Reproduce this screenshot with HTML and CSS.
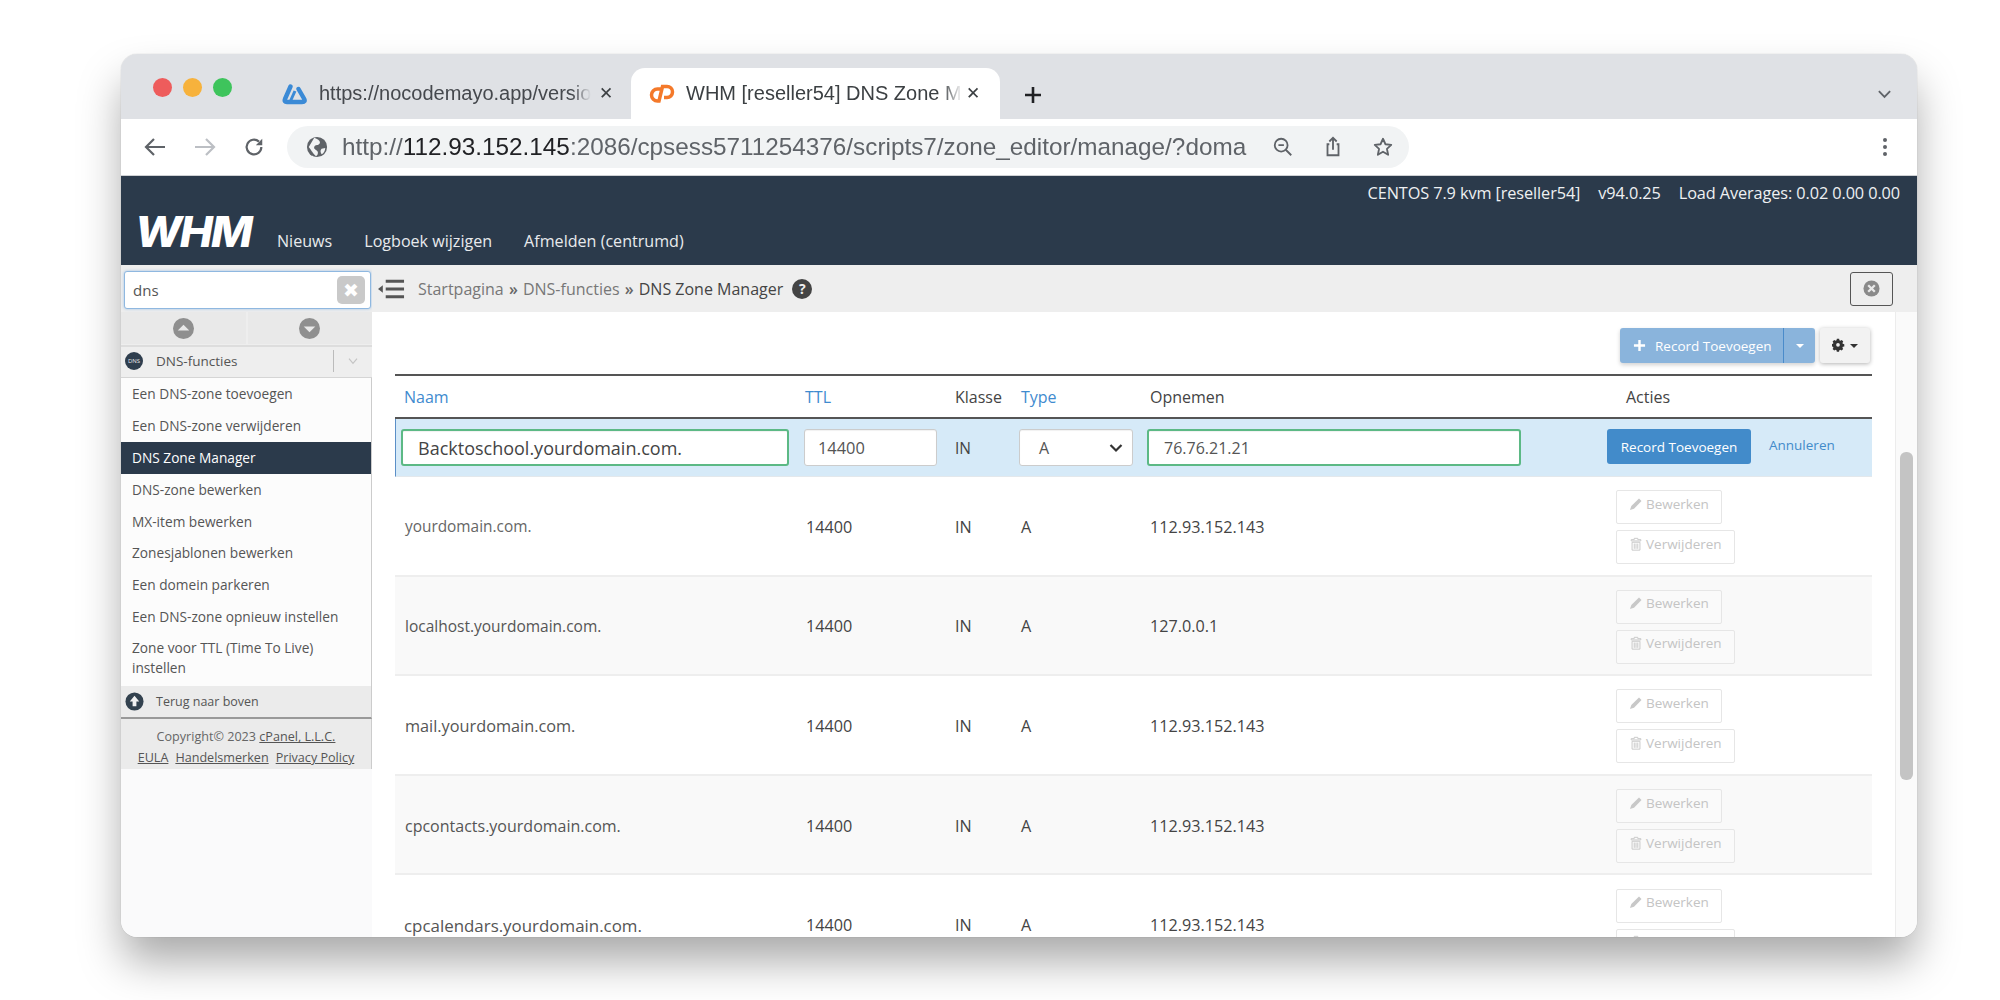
FILE: index.html
```html
<!DOCTYPE html>
<html lang="nl">
<head>
<meta charset="utf-8">
<title>WHM DNS Zone Manager</title>
<link rel="stylesheet" href="styles.css">
</head>
<body>
<div class="window">
  <div class="tabstrip">
    <div class="lights"><i class="light red"></i><i class="light yellow"></i><i class="light green"></i></div>
    <div class="tab">
      <svg class="favicon" viewBox="0 0 26 22"><path d="M9.500 3.500 4 16q-1.200 3 2 3h15q4 0 2-3.500L17.500 6" fill="none" stroke="#3b8ad6" stroke-width="4.400" stroke-linejoin="round" stroke-linecap="round"/><path d="M14 8 9.500 18" stroke="#3b8ad6" stroke-width="3"/></svg>
      <span class="tab-title">https://nocodemayo.app/versio</span>
      <span class="tab-close">✕</span>
    </div>
    <div class="tab active">
      <svg class="cp-logo" viewBox="0 0 26 21" role="img" aria-label="cPanel"><path d="M12 6H8.500a6 6 0 0 0 0 12H10l3.500-14.500H18a5.500 5.500 0 0 1 0 11h-3" fill="none" stroke="#f4792a" stroke-width="3.500"/></svg>
      <span class="tab-title">WHM [reseller54] DNS Zone M</span>
      <span class="tab-close">✕</span>
    </div>
    <svg class="newtab" viewBox="0 0 20 20"><path d="M10 2v16M2 10h16" stroke="#202124" stroke-width="2.600"/></svg>
    <svg class="chevron" viewBox="0 0 16 10"><path d="M2 2l6 6 6-6" fill="none" stroke="#5f6368" stroke-width="2"/></svg>
  </div>
  <div class="addressbar">
    <svg class="nav-icon" viewBox="0 0 24 24"><path d="M22 12H4M11 4l-8 8 8 8" fill="none" stroke="#5f6368" stroke-width="2.200"/></svg>
    <svg class="nav-icon" viewBox="0 0 24 24"><path d="M2 12h18M13 4l8 8-8 8" fill="none" stroke="#bcbfc4" stroke-width="2.200"/></svg>
    <svg class="nav-icon reload" viewBox="0 0 24 24"><path d="M20 12a8 8 0 1 1-2.600-5.900" fill="none" stroke="#5f6368" stroke-width="2.400"/><path d="M21 3v7h-7z" fill="#5f6368"/></svg>
    <div class="omnibox">
      <svg class="globe" viewBox="0 0 24 24"><circle cx="12" cy="12" r="11" fill="#5f6368"/><path d="M9 2c4 2 7 3 6 6s-5 1-6 4 4 3 4 6-1 3-2 4C7 19 5 14 3 12c2-3 4-7 6-10zM17 14l4-1c0 3-2 6-4 7-1-2-2-4 0-6z" fill="#f1f3f4"/></svg>
      <span class="url">http://<b>112.93.152.145</b>:2086/cpsess5711254376/scripts7/zone_editor/manage/?doma</span>
      <svg class="omni-icon" viewBox="0 0 24 24"><circle cx="10" cy="10" r="7" fill="none" stroke="#5f6368" stroke-width="2"/><path d="M15 15l6 6M7 10h6" stroke="#5f6368" stroke-width="2"/></svg>
      <svg class="omni-icon" viewBox="0 0 24 24"><path d="M8 9H6v12h12V9h-2M12 15V3M8 6l4-4 4 4" fill="none" stroke="#5f6368" stroke-width="2"/></svg>
      <svg class="omni-icon" viewBox="0 0 24 24"><path d="M12 3l2.700 6 6.300.7-4.700 4.300 1.300 6.500L12 17.200 6.400 20.500l1.300-6.500L3 9.700 9.300 9z" fill="none" stroke="#5f6368" stroke-width="2" stroke-linejoin="round"/></svg>
    </div>
    <svg class="kebab" viewBox="0 0 6 22"><circle cx="3" cy="4" r="2" fill="#5f6368"/><circle cx="3" cy="11" r="2" fill="#5f6368"/><circle cx="3" cy="18" r="2" fill="#5f6368"/></svg>
  </div>
  <header class="whm-header">
    <div class="sysinfo"><span>CENTOS 7.9 kvm [reseller54]</span><span>v94.0.25</span><span>Load Averages: 0.02 0.00 0.00</span></div>
    <div class="brandrow">
      <span class="whm-logo">WHM</span>
      <nav class="topnav"><a>Nieuws</a><a>Logboek wijzigen</a><a>Afmelden (centrumd)</a></nav>
    </div>
  </header>
  <div class="workspace">
    <aside class="sidebar">
      <div class="searchwrap">
        <div class="search"><span>dns</span><span class="clear">✖</span></div>
      </div>
      <div class="arrows">
        <div class="arrow"><svg viewBox="0 0 22 22"><circle cx="11" cy="11" r="11" fill="#8f8f8f"/><path d="M5 13l6-6 6 6z" fill="#e8e8e8"/></svg></div>
        <div class="arrow"><svg viewBox="0 0 22 22"><circle cx="11" cy="11" r="11" fill="#8f8f8f"/><path d="M5 9l6 6 6-6z" fill="#e8e8e8"/></svg></div>
      </div>
      <div class="category">
        <span class="dns-badge">DNS</span>
        <span class="cat-name">DNS-functies</span>
        <span class="cat-toggle"><svg viewBox="0 0 14 10"><path d="M2 2l5 6 5-6" fill="none" stroke="#c4c4c4" stroke-width="1.500"/></svg></span>
      </div>
      <ul class="menu">
        <li>Een DNS-zone toevoegen</li>
        <li>Een DNS-zone verwijderen</li>
        <li class="current">DNS Zone Manager</li>
        <li>DNS-zone bewerken</li>
        <li>MX-item bewerken</li>
        <li>Zonesjablonen bewerken</li>
        <li>Een domein parkeren</li>
        <li>Een DNS-zone opnieuw instellen</li>
        <li class="two-line">Zone voor TTL (Time To Live) instellen</li>
      </ul>
      <div class="backtop">
        <svg viewBox="0 0 20 20"><circle cx="10" cy="10" r="9.500" fill="#33424f"/><path d="M10 4l5 6h-3v5H8v-5H5z" fill="#f2f2f2"/></svg>
        <span>Terug naar boven</span>
      </div>
      <div class="copyright">
        <div>Copyright© 2023 <u>cPanel, L.L.C.</u></div>
        <div class="legal"><u>EULA</u> <u>Handelsmerken</u> <u>Privacy Policy</u></div>
      </div>
    </aside>
    <div class="mainpane">
      <div class="breadcrumb">
        <svg class="crumb-menu" viewBox="0 0 28 20"><path d="M8 2h19M8 10h19M8 18h19" stroke="#555" stroke-width="3"/><path d="M0 10l5-4v8z" fill="#555"/></svg>
        <span class="crumbs">Startpagina <b>»</b> DNS-functies <b>»</b> <em>DNS Zone Manager</em></span>
        <span class="help">?</span>
        <span class="closebtn"><svg viewBox="0 0 18 18"><circle cx="9" cy="9" r="8.500" fill="#8a8a8a"/><path d="M5.500 5.500l7 7M12.500 5.500l-7 7" stroke="#e9e9e9" stroke-width="2.400"/></svg></span>
      </div>
      <div class="contentwrap">
        <main class="content">
          <div class="toolbar">
            <div class="addbtn"><span class="addmain"><svg viewBox="0 0 14 14"><path d="M7 1v12M1 7h12" stroke="#fff" stroke-width="2.600"/></svg>Record Toevoegen</span><span class="addcaret"><i class="caret"></i></span></div>
            <div class="gearbtn">
              <svg viewBox="0 0 16 16"><path d="M6.500 1h3l.4 2 1.300.6 1.800-1 2 2.200-1.100 1.700.5 1.300 2 .5v3l-2 .4-.5 1.300 1 1.800-2.100 2-1.700-1.100-1.300.5-.4 2h-3l-.4-2-1.300-.5-1.700 1.100-2.200-2 1.100-1.800-.6-1.300-2-.4v-3l2-.5.6-1.300-1.100-1.700 2.200-2.200 1.700 1 1.300-.6z" transform="scale(.8)" fill="#333"/><circle cx="6.400" cy="7.200" r="2" fill="#eee"/></svg>
              <i class="caret dark"></i>
            </div>
          </div>
          <div class="row head">
            <span class="link">Naam</span><span class="link">TTL</span><span>Klasse</span><span class="link">Type</span><span>Opnemen</span><span class="acties">Acties</span>
          </div>
          <div class="row edit">
            <div class="field ok name">Backtoschool.yourdomain.com.</div>
            <div class="field ttl">14400</div>
            <span class="cls">IN</span>
            <div class="field select">A<svg viewBox="0 0 14 10"><path d="M1.500 2l5.500 5.500L12.500 2" fill="none" stroke="#333" stroke-width="2.200"/></svg></div>
            <div class="field ok rec">76.76.21.21</div>
            <div class="editacts"><span class="primary">Record Toevoegen</span><a class="cancel">Annuleren</a></div>
          </div>
          <div class="row data">
            <span class="dname d-root">yourdomain.com.</span><span class="ttlv">14400</span><span>IN</span><span>A</span><span>112.93.152.143</span>
            <div class="acts">
              <span class="ghost"><svg viewBox="0 0 14 14"><path d="M1 13l1.300-4L10 1.500 12.500 4 5 11.700z" fill="#c8c8c8"/></svg>Bewerken</span>
              <span class="ghost"><svg viewBox="0 0 14 16"><path d="M5 1.500h4V3h3.500v1.500h-11V3H5zM2.500 6h9v9h-9zM5 7.500v6M7 7.500v6M9 7.500v6" fill="none" stroke="#c8c8c8" stroke-width="1.100"/></svg>Verwijderen</span>
            </div>
          </div>
          <div class="row data alt">
            <span class="dname d-local">localhost.yourdomain.com.</span><span class="ttlv">14400</span><span>IN</span><span>A</span><span>127.0.0.1</span>
            <div class="acts">
              <span class="ghost"><svg viewBox="0 0 14 14"><path d="M1 13l1.300-4L10 1.500 12.500 4 5 11.700z" fill="#c8c8c8"/></svg>Bewerken</span>
              <span class="ghost"><svg viewBox="0 0 14 16"><path d="M5 1.500h4V3h3.500v1.500h-11V3H5zM2.500 6h9v9h-9zM5 7.500v6M7 7.500v6M9 7.500v6" fill="none" stroke="#c8c8c8" stroke-width="1.100"/></svg>Verwijderen</span>
            </div>
          </div>
          <div class="row data">
            <span class="dname d-mail">mail.yourdomain.com.</span><span class="ttlv">14400</span><span>IN</span><span>A</span><span>112.93.152.143</span>
            <div class="acts">
              <span class="ghost"><svg viewBox="0 0 14 14"><path d="M1 13l1.300-4L10 1.500 12.500 4 5 11.700z" fill="#c8c8c8"/></svg>Bewerken</span>
              <span class="ghost"><svg viewBox="0 0 14 16"><path d="M5 1.500h4V3h3.500v1.500h-11V3H5zM2.500 6h9v9h-9zM5 7.500v6M7 7.500v6M9 7.500v6" fill="none" stroke="#c8c8c8" stroke-width="1.100"/></svg>Verwijderen</span>
            </div>
          </div>
          <div class="row data alt">
            <span class="dname d-contacts">cpcontacts.yourdomain.com.</span><span class="ttlv">14400</span><span>IN</span><span>A</span><span>112.93.152.143</span>
            <div class="acts">
              <span class="ghost"><svg viewBox="0 0 14 14"><path d="M1 13l1.300-4L10 1.500 12.500 4 5 11.700z" fill="#c8c8c8"/></svg>Bewerken</span>
              <span class="ghost"><svg viewBox="0 0 14 16"><path d="M5 1.500h4V3h3.500v1.500h-11V3H5zM2.500 6h9v9h-9zM5 7.500v6M7 7.500v6M9 7.500v6" fill="none" stroke="#c8c8c8" stroke-width="1.100"/></svg>Verwijderen</span>
            </div>
          </div>
          <div class="row data">
            <span class="dname d-cal">cpcalendars.yourdomain.com.</span><span class="ttlv">14400</span><span>IN</span><span>A</span><span>112.93.152.143</span>
            <div class="acts">
              <span class="ghost"><svg viewBox="0 0 14 14"><path d="M1 13l1.300-4L10 1.500 12.500 4 5 11.700z" fill="#c8c8c8"/></svg>Bewerken</span>
              <span class="ghost"><svg viewBox="0 0 14 16"><path d="M5 1.500h4V3h3.500v1.500h-11V3H5zM2.500 6h9v9h-9zM5 7.500v6M7 7.500v6M9 7.500v6" fill="none" stroke="#c8c8c8" stroke-width="1.100"/></svg>Verwijderen</span>
            </div>
          </div>
        </main>
        <div class="scrolltrack"><div class="scrollthumb"></div></div>
      </div>
    </div>
  </div>
</div>
</body>
</html>
```

FILE: styles.css
```css
* { box-sizing: border-box; }
html, body { margin: 0; height: 1000px; overflow: hidden; background: #fff; }
body { padding: 54px 83px 0 121px; font-family: "Open Sans", "Liberation Sans", sans-serif; color: #444; }

.window {
  width: 1796px; height: 883px; border-radius: 16px; overflow: hidden;
  display: flex; flex-direction: column; background: #fff;
  box-shadow: 0 0 1px rgba(0,0,0,.35), 0 26px 44px -2px rgba(0,0,0,.34);
  filter: blur(.45px);
}

/* browser chrome */
.tabstrip { height: 65px; flex: none; background: #dfe1e5; display: flex; align-items: flex-end; padding-left: 32px; position: relative; }
.lights { display: flex; gap: 11px; align-self: flex-start; margin: 24px 35px 0 0; }
.light { width: 19px; height: 19px; border-radius: 50%; display: block; }
.red { background: #ee5c5c; } .yellow { background: #f7b23c; } .green { background: #3ec45c; }
.tab { height: 51px; width: 360px; display: flex; align-items: center; padding: 0 14px 0 14px; font: 20px "Liberation Sans", sans-serif; color: #45484d; flex: none; }
.tab.active { width: 369px; background: #fff; border-radius: 14px 14px 0 0; padding: 0 20px 0 18px; margin-left: 4px; }
.tab.active .tab-title { color: #3c4043; }
.tab-title { flex: none; white-space: nowrap; -webkit-mask-image: linear-gradient(90deg, #000 93%, transparent); mask-image: linear-gradient(90deg, #000 93%, transparent); }
.tab-close { font-size: 17px; color: #3c4043; margin-left: auto; }
.favicon { width: 26px; height: 22px; flex: none; margin-right: 12px; }
.cp-logo { width: 26px; height: 21px; flex: none; margin-right: 11px; }
.newtab { width: 20px; height: 20px; margin: 0 0 14px 23px; }
.chevron { width: 15px; height: 10px; margin: 0 25px 20px auto; }

.addressbar { height: 57px; flex: none; background: #fff; display: flex; align-items: center; padding-left: 22px; border-bottom: 1px solid #cfd1d4; }
.nav-icon { width: 24px; height: 24px; margin-right: 26px; flex: none; }
.reload { width: 22px; height: 22px; }
.omnibox { margin-left: -4px; width: 1122px; height: 42px; border-radius: 21px; background: #f1f3f4; display: flex; align-items: center; padding-left: 19px; flex: none; }
.globe { width: 22px; height: 22px; margin-right: 14px; flex: none; }
.url { font: 24.300px "Liberation Sans", sans-serif; color: #5f6368; white-space: nowrap; width: 930px; flex: none; }
.url b { color: #202124; font-weight: 400; }
.omni-icon { width: 22px; height: 22px; margin-right: 28px; flex: none; }
.kebab { width: 6px; height: 22px; margin-left: 473px; flex: none; }

/* WHM header */
.whm-header { height: 89px; flex: none; background: #2b3a4b; color: #fff; display: flex; flex-direction: column; }
.sysinfo { display: flex; justify-content: flex-end; gap: 18px; padding: 6px 17px 0 0; font-size: 16.300px; line-height: 22px; color: #eef0f2; letter-spacing: -.1px; }
.brandrow { display: flex; align-items: flex-end; margin-top: 9px; padding-left: 14px; }
.whm-logo { font: italic 800 43px/40px Inter, sans-serif; letter-spacing: -2px; width: 142px; transform: translateY(-2px) scaleX(1.030); transform-origin: left; color: #fff; }
.topnav { display: flex; gap: 32px; font-size: 16.100px; line-height: 22px; color: #e8eaed; padding-bottom: 1px; }

.workspace { flex: 1; display: flex; min-height: 0; background: #fafafb; }

/* sidebar */
.sidebar { width: 251px; flex: none; display: flex; flex-direction: column; font-size: 13.700px; color: #555; }
.searchwrap { background: #eee; padding: 6px 1px 3px 3px; }
.search { height: 38px; background: #fff; border: 1px solid #8fb8e0; border-radius: 3px; box-shadow: 0 0 3px rgba(82,150,220,.5); display: flex; align-items: center; justify-content: space-between; padding: 0 5px 0 8px; font-size: 15px; color: #555; }
.clear { width: 28px; height: 28px; background: #c9c9c9; border-radius: 5px; color: #fff; display: flex; align-items: center; justify-content: center; font-size: 19px; }
.arrows { display: flex; gap: 2px; background: #eee; height: 33px; padding-bottom: 1px; }
.arrow { flex: 1; background: #e9e9e9; display: flex; align-items: center; justify-content: center; }
.arrow svg { width: 21px; height: 21px; }
.category { height: 33px; background: #eee; border-top: 2px solid #ddd; border-bottom: 1px solid #d5d5d5; display: flex; align-items: center; padding: 0 0 3px 4px; font-size: 13.500px; color: #555; }
.dns-badge { width: 18px; height: 18px; border-radius: 50%; background: #2f3e4e; color: #e8e8e8; font-size: 6px; line-height: 18px; text-align: center; flex: none; }
.cat-name { margin-left: 13px; flex: 1; }
.cat-toggle { width: 39px; height: 22px; border-left: 1px solid #bbb; display: flex; align-items: center; justify-content: center; }
.cat-toggle svg { width: 12px; height: 8px; }
.menu { list-style: none; margin: 0; padding: 0; background: #fcfcfc; border-right: 1px solid #ccc; }
.menu li { height: 31.900px; padding: 0 11px; line-height: 31px; white-space: nowrap; }
.menu li.current { background: #2b3a4b; color: #fff; }
.menu li.two-line { height: 53px; white-space: normal; line-height: 20px; padding-top: 5px; }
.backtop { height: 33px; background: #ebebeb; border-right: 1px solid #ccc; border-bottom: 2px solid #999; display: flex; align-items: center; gap: 12px; padding-left: 4px; font-size: 12.500px; }
.backtop svg { width: 19px; height: 19px; flex: none; }
.copyright { height: 50px; background: #ebebeb; font-size: 12.600px; line-height: 21px; text-align: center; color: #666; padding-top: 7px; border-right: 1px solid #ccc; }
.copyright u { color: #555; }
.legal { display: flex; justify-content: center; gap: 7px; }

/* main */
.mainpane { flex: 1; min-width: 0; display: flex; flex-direction: column; background: #fff; }
.breadcrumb { height: 47px; flex: none; background: #eee; display: flex; align-items: center; padding-left: 6px; font-size: 16px; color: #777; }
.crumb-menu { width: 27px; height: 20px; margin-right: 13px; }
.crumbs b { font-weight: 600; color: #666; margin: 0 1px; }
.crumbs em { font-style: normal; color: #444; }
.help { width: 20px; height: 20px; border-radius: 50%; background: #444; color: #eee; font-weight: 700; font-size: 14px; line-height: 20px; text-align: center; margin-left: 9px; }
.closebtn { width: 43px; height: 34px; border: 1px solid #555; border-radius: 3px; margin-left: auto; margin-right: 24px; display: flex; align-items: center; justify-content: center; }
.closebtn svg { width: 17px; height: 17px; }

.contentwrap { flex: 1; display: flex; min-height: 0; }
.content { flex: 1; min-width: 0; padding: 16px 23px 0; overflow: hidden; }
.scrolltrack { width: 22px; flex: none; background: #fafafa; border-left: 1px solid #ececec; padding: 140px 4px 0; }
.scrollthumb { height: 328px; background: #c4c4c4; border-radius: 6px; }

.toolbar { display: flex; justify-content: flex-end; gap: 5px; padding-right: 2px; height: 48px; border-bottom: 2px solid #555; }
.addbtn { width: 195px; height: 35px; display: flex; background: #8ab4dc; border-radius: 3px; color: #fff; box-shadow: 0 2px 4px rgba(0,0,0,.18); font-size: 13.500px; }
.addmain { width: 164px; display: flex; align-items: center; padding-left: 13px; gap: 9px; border-right: 1px solid #4a8bca; white-space: nowrap; }
.addmain svg { width: 13px; height: 13px; flex: none; }
.addcaret { flex: 1; display: flex; align-items: center; justify-content: center; }
.caret { width: 0; height: 0; border: 4px solid transparent; border-top: 4px solid #fff; border-bottom: 0; display: block; }
.caret.dark { border-top-color: #333; }
.gearbtn { width: 50px; height: 35px; background: #f2f2f2; border-radius: 3px; box-shadow: 0 1px 4px rgba(0,0,0,.3); display: flex; align-items: center; justify-content: center; gap: 3px; }
.gearbtn svg { width: 15px; height: 15px; }

.row { display: grid; grid-template-columns: 400px 150px 66px 129px 456px 1fr; align-items: center; }
.row > * { padding-left: 10px; }
.head { height: 43px; border-bottom: 2px solid #555; font-size: 16px; color: #444; }
.head .link:first-child { padding-left: 9px; }
.link { color: #3f8bcf; }
.acties { padding-left: 30px; }
.edit { height: 58px; background: #d6eaf8; border-left: 1px solid #5b8fc7; border-bottom: 1px solid #e3e8ec; font-size: 15px; }
.edit > * { padding-left: 0; }
.field { height: 37px; background: #fff; border: 1px solid #ccc; border-radius: 3px; display: flex; align-items: center; color: #555; font-size: 15px; box-shadow: inset 0 1px 1px rgba(0,0,0,.06); }
.field.ok { border: 2px solid #5cb985; }
.name { margin-left: 5px; width: 388px; padding-left: 15px; font-size: 18px; color: #444; }
.ttl { margin-left: 8px; width: 133px; padding-left: 13px; font-size: 16.400px; }
.cls { padding-left: 9px; font-size: 15.500px; }
.select { width: 114px; padding: 0 9px 0 19px; margin-left: 7px; justify-content: space-between; font-size: 16px; }
.select svg { width: 14px; height: 10px; }
.rec { width: 374px; padding-left: 15px; margin-left: 6px; font-size: 16px; }
.editacts { display: flex; align-items: center; gap: 18px; margin-left: 10px; margin-top: -2px; white-space: nowrap; font-size: 13.500px; }
.primary { width: 144px; height: 35px; background: #428bca; color: #fff; border-radius: 3px; display: flex; align-items: center; justify-content: center; }
.cancel { color: #428bca; margin-top: -3px; }

.data { height: 99.600px; padding-top: 2px; border-bottom: 2px solid #eee; font-size: 16.200px; color: #444; }
.data.alt { background: #f9f9f9; }
.dname { color: #555; white-space: nowrap; }
.d-root { font-size: 15.400px; color: #666; }
.d-local { font-size: 15.500px; }
.d-mail { font-size: 16.300px; }
.d-contacts { font-size: 16px; }
.d-cal { font-size: 16.900px; margin-left: -1px; }
.ttlv { font-weight: 500; padding-left: 11px; }
.acts { display: flex; flex-direction: column; align-items: flex-start; gap: 6px; padding-left: 20px; margin-top: 1px; }
.ghost { height: 34px; border: 1px solid #e6e6e6; background: #fff; color: #c4c4c4; font-size: 13.500px; padding: 0 12px 7px; display: flex; align-items: center; gap: 3px; border-radius: 2px; }
.alt .ghost { background: #fafafa; }
.ghost svg { width: 14px; height: 14px; flex: none; }
```
